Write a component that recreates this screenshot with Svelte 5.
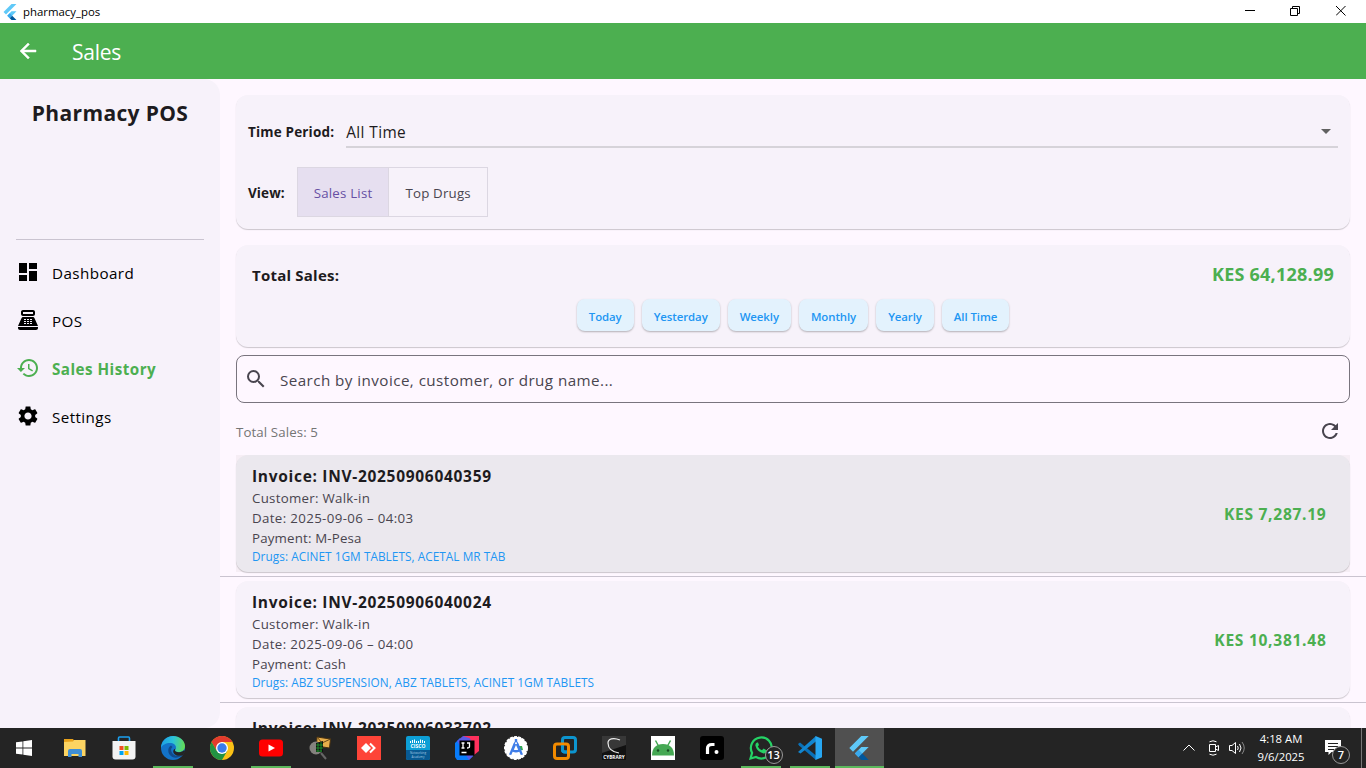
<script>
  const nav = [
    { label: 'Dashboard', icon: 'dash' },
    { label: 'POS', icon: 'pos' },
    { label: 'Sales History', icon: 'history', active: true },
    { label: 'Settings', icon: 'settings' }
  ];
  const chips = ['Today', 'Yesterday', 'Weekly', 'Monthly', 'Yearly', 'All Time'];
  const invoices = [
    { id: 'INV-20250906040359', date: '2025-09-06 – 04:03', pay: 'M-Pesa', drugs: 'ACINET 1GM TABLETS, ACETAL MR TAB', total: '7,287.19', hover: true },
    { id: 'INV-20250906040024', date: '2025-09-06 – 04:00', pay: 'Cash', drugs: 'ABZ SUSPENSION, ABZ TABLETS, ACINET 1GM TABLETS', total: '10,381.48' },
    { id: 'INV-20250906033702' }
  ];
  const tasks = [
    { n: 'files' }, { n: 'store' }, { n: 'edge', open: true }, { n: 'chrome' }, { n: 'youtube', open: true },
    { n: 'mail' }, { n: 'anydesk' }, { n: 'cisco' }, { n: 'idea' }, { n: 'studio' }, { n: 'vmware' },
    { n: 'cybrary' }, { n: 'android' }, { n: 'r' }, { n: 'whatsapp', open: true }, { n: 'code', open: true },
    { n: 'flutter', open: true, active: true }
  ];
</script>

{#snippet flutter(size)}
  <svg width={size} height={size} viewBox="0 0 24 24">
    <path fill="#5fc9f8" d="M14.3 0 2.3 12l3.7 3.7L21.7 0zM14.3 11 7.9 17.500l3.700 3.700L21.700 11z" />
    <path fill="#39a9ee" d="m7.900 17.500 3.700-3.700 3.700 3.700-3.700 3.700z" />
    <path fill="#01579b" d="m11.600 21.200 3.700-3.700L21.700 24h-7.400z" />
  </svg>
{/snippet}

<div class="screen">
  <div class="titlebar">
    {@render flutter(16)}
    <span class="wname">pharmacy_pos</span>
    <div class="wbtns">
      <svg width="10" height="11" viewBox="0 0 10 11"><path d="M0 4.500h10" /></svg>
      <svg width="11" height="11" viewBox="0 0 11 11"><path d="M.5 2.500h7v7h-7zM2.500 2.500v-2h7v7h-2" /></svg>
      <svg width="11" height="11" viewBox="0 0 11 11"><path d="m0 0 9.500 9.500m0-9.500L0 9.500" /></svg>
    </div>
  </div>
  <header>
    <svg class="mi back" viewBox="0 0 24 24"><path d="M20 11H7.830l5.590-5.590L12 4l-8 8 8 8 1.410-1.410L7.830 13H20v-2z" /></svg>
    <h1>Sales</h1>
  </header>
  <div class="body">
    <aside>
      <div class="brand">Pharmacy POS</div>
      <nav>
        {#each nav as n}
          <div class="item" class:active={n.active}>
            <svg class="mi" viewBox="0 0 24 24">
              {#if n.icon === 'dash'}
                <path d="M3 13h8V3H3v10zm0 8h8v-6H3v6zm10 0h8V11h-8v10zm0-18v6h8V3h-8z" />
              {:else if n.icon === 'pos'}
                <path fill-rule="evenodd" d="M17 2H7c-1.100 0-2 .9-2 2v2c0 1.100.9 2 2 2h10c1.100 0 2-.9 2-2V4c0-1.100-.9-2-2-2zm0 4H7V4h10v2zm3 16H4c-1.100 0-2-.9-2-2v-1h20v1c0 1.100-.9 2-2 2zM18.530 10.190C18.210 9.470 17.490 9 16.700 9H7.300c-.79 0-1.510.47-1.830 1.190L2 18h20zM8 11h2v1H8zm0 2h2v1H8zm0 2h2v1H8zm3-4h2v1h-2zm0 2h2v1h-2zm0 2h2v1h-2zm3-4h2v1h-2zm0 2h2v1h-2zm0 2h2v1h-2z" />
              {:else if n.icon === 'history'}
                <path d="M13 3c-4.970 0-9 4.030-9 9H1l3.890 3.890.07.14L9 12H6c0-3.870 3.130-7 7-7s7 3.130 7 7-3.130 7-7 7c-1.930 0-3.680-.79-4.940-2.060l-1.420 1.420C8.270 19.990 10.510 21 13 21c4.970 0 9-4.030 9-9s-4.030-9-9-9zm-1 5v5l4.280 2.540.72-1.210-3.500-2.080V8H12z" />
              {:else}
                <path d="M19.140 12.940c.04-.3.06-.61.06-.94 0-.32-.02-.64-.07-.94l2.030-1.580c.18-.14.23-.41.12-.61l-1.920-3.320c-.12-.22-.37-.29-.59-.22l-2.390.96c-.5-.38-1.030-.7-1.620-.94l-.36-2.540c-.04-.24-.24-.41-.48-.41h-3.840c-.24 0-.43.17-.47.41l-.36 2.540c-.59.24-1.130.57-1.620.94l-2.390-.96c-.22-.08-.47 0-.59.22L2.740 8.870c-.12.21-.08.47.12.61l2.030 1.580c-.05.3-.09.63-.09.94s.02.64.07.94l-2.030 1.580c-.18.14-.23.41-.12.61l1.920 3.320c.12.22.37.29.59.22l2.390-.96c.5.38 1.030.7 1.620.94l.36 2.540c.05.24.24.41.48.41h3.840c.24 0 .44-.17.47-.41l.36-2.540c.59-.24 1.130-.56 1.620-.94l2.390.96c.22.08.47 0 .59-.22l1.920-3.320c.12-.22.07-.47-.12-.61l-2.010-1.580zM12 15.600c-1.980 0-3.600-1.620-3.600-3.600s1.620-3.600 3.600-3.600 3.600 1.620 3.600 3.600-1.620 3.600-3.600 3.600z" />
              {/if}
            </svg>
            <span>{n.label}</span>
          </div>
        {/each}
      </nav>
    </aside>
    <main>
      <section class="card filters">
        <div class="frow period">
          <b>Time Period:</b>
          <div class="select"><span>All Time</span><svg width="24" height="24" viewBox="0 0 24 24"><path fill="#616161" d="m7 10 5 5 5-5z" /></svg></div>
        </div>
        <div class="frow">
          <b>View:</b>
          <div class="toggle"><span class="on">Sales List</span><span>Top Drugs</span></div>
        </div>
      </section>
      <section class="card totals">
        <div class="trow"><b>Total Sales:</b><strong>KES 64,128.99</strong></div>
        <div class="chips">{#each chips as c}<button>{c}</button>{/each}</div>
      </section>
      <div class="search">
        <svg class="mi" viewBox="0 0 24 24"><path d="M15.500 14h-.79l-.28-.27A6.471 6.471 0 0 0 16 9.500 6.500 6.500 0 1 0 9.500 16c1.610 0 3.090-.59 4.230-1.570l.27.28v.79l5 4.990L20.490 19l-4.990-5zm-6 0C7.010 14 5 11.990 5 9.500S7.010 5 9.500 5 14 7.010 14 9.500 11.990 14 9.500 14z" /></svg>
        <span>Search by invoice, customer, or drug name...</span>
      </div>
      <div class="count">
        <span>Total Sales: 5</span>
        <svg class="mi" viewBox="0 0 24 24"><path d="M17.650 6.350C16.200 4.900 14.210 4 12 4c-4.420 0-7.990 3.580-7.990 8s3.570 8 7.990 8c3.730 0 6.840-2.550 7.730-6h-2.080c-.82 2.330-3.040 4-5.650 4-3.310 0-6-2.690-6-6s2.690-6 6-6c1.660 0 3.140.69 4.220 1.780L13 11h7V4l-2.350 2.350z" /></svg>
      </div>
      <div class="list">
        {#each invoices as v}
          <div class="slot">
            <div class="hit" class:hover={v.hover}>
              <article class="card inv">
                <div>
                  <h2>Invoice: {v.id}</h2>
                  {#if v.total}
                    <p>Customer: Walk-in</p>
                    <p class="date">Date: {v.date}</p>
                    <p class="pay">Payment: {v.pay}</p>
                    <p class="drugs">Drugs: {v.drugs}</p>
                  {/if}
                </div>
                {#if v.total}<strong>KES {v.total}</strong>{/if}
              </article>
            </div>
          </div>
        {/each}
      </div>
    </main>
  </div>
  <footer>
    <div class="start"><svg width="16" height="16" viewBox="0 0 16 16"><path fill="#fff" d="M0 2.300 6.500 1.400v6.200H0zM7.300 1.300 16 0v7.600H7.300zM0 8.400h6.500v6.200L0 13.700zM7.300 8.400H16V16l-8.700-1.300z" /></svg></div>
    {#each tasks as k}
      <div class="task" class:open={k.open} class:active={k.active}>
        {#if k.n === 'flutter'}
          {@render flutter(24)}
        {:else}
          <svg width="24" height="24" viewBox="0 0 24 24">
            {#if k.n === 'files'}
              <path fill="#e9a21b" d="M1 3h9l2 3H1z" /><path fill="#fcd462" d="M1 6l9-.500 1-1.500h11.500v16H1z" /><path fill="#3f8fd6" d="M5 21v-6q0-2 2-2h10q2 0 2 2v6h-3.500v-3h-7v3z" />
            {:else if k.n === 'store'}
              <path fill="none" stroke="#1ba0f0" stroke-width="1.600" d="M6.500 6V2.200q0-1.200 1-1.200h9q1 0 1 1.200V6" /><path fill="#f3f3f3" d="M.5 5h23v15.500q0 3-3 3h-17q-3 0-3-3z" />
              <path fill="#f25022" d="M7.500 10h4v4h-4z" /><path fill="#7fba00" d="M12.500 10h4v4h-4z" /><path fill="#00a4ef" d="M7.500 15h4v4h-4z" /><path fill="#ffb900" d="M12.500 15h4v4h-4z" />
            {:else if k.n === 'edge'}
              <defs><linearGradient id="eg" x1="0" x2="1" y1="0.300" y2="0.400"><stop offset="0" stop-color="#1c9ee8" /><stop offset=".5" stop-color="#2cc3d8" /><stop offset="1" stop-color="#63dd55" /></linearGradient></defs>
              <circle cx="12" cy="12" r="12" fill="#1373c9" />
              <path fill="url(#eg)" d="M0 12C0 5 5.500 0 12 0s12 4.800 12 10c0 4-3 6-6 6-2.600 0-4-.9-4-1.800 0-.6 1-1 1-2.900C15 9 12.500 7 9 7c-4 0-8 2-9 5z" />
              <path fill="#114a8b" d="M10 9.500c-3 1.800-3.600 6-1.300 9.200C11.500 22.500 17 22.500 21 19.500c-3 1-6.500.8-8.800-1.300C9.800 16 9.300 12.500 11.500 11z" />
              <path fill="#242424" d="M14.600 12.500c-.4.8-.8 1.300-.6 2 .3 1.200 2 1.800 4.200 1.700 2 0 3.800-.8 5-2.200l.8 1.500-1.800 3.500c-3 1.500-7 1-8.800-1-1.700-2-1.700-4.500 1.200-5.500z" />
            {:else if k.n === 'chrome'}
              <circle cx="12" cy="12" r="12" fill="#fbc116" /><path fill="#e33b2e" d="M1.600 6A12 12 0 0 1 22.400 6H12L6.800 15z" /><path fill="#229342" d="M1.600 6A12 12 0 0 0 12 24l5.200-9H6.800z" /><circle cx="12" cy="12" r="6" fill="#fff" /><circle cx="12" cy="12" r="4.700" fill="#3a7cec" />
            {:else if k.n === 'youtube'}
              <rect y="3.500" width="24" height="17" rx="3.500" fill="#f00" /><path fill="#fff" d="m9.500 8.500 6.500 3.500-6.500 3.500z" />
            {:else if k.n === 'mail'}
              <path fill="#e7ae4b" stroke="#473010" d="m9 1 13.500 2-1 9-13-2z" /><path fill="none" stroke="#6a4919" d="m9 1 5 6 8.500-4" /><circle cx="8" cy="12" r="6.500" fill="#85827e" /><path fill="#111" d="m8 7 7-2v11H8z" /><path stroke="#1fa32f" stroke-width=".8" d="M8 9h7M8 12h7M8 15h6M10 7v9M13 6v10" /><path stroke="#666" stroke-width="2" d="m13 17 5 6" />
            {:else if k.n === 'anydesk'}
              <path fill="#fe4438" d="M0 0h24v24H0z" /><path fill="#fff" d="m9 7 5 5-5 5-5-5z" /><path fill="none" stroke="#fff" stroke-width="2" d="m13 7.500 4.500 4.500-4.500 4.500" />
            {:else if k.n === 'cisco'}
              <rect width="24" height="24" rx="2" fill="#0d9fd6" /><path fill="#085a93" d="M0 14h24v8q0 2-2 2H2q-2 0-2-2z" /><path stroke="#fff" d="M4.500 5v2M6.500 4v3M8.500 3.500V7M10.500 5v2M12.500 5v2M14.500 3.500V7M16.500 4v3M18.500 5v2" /><text x="12" y="12" fill="#fff" font-size="5" font-weight="700" text-anchor="middle">CISCO</text><text x="12" y="18" fill="#a9cce4" font-size="3" text-anchor="middle">Networking</text><text x="12" y="21.500" fill="#a9cce4" font-size="3" text-anchor="middle">Academy</text>
            {:else if k.n === 'idea'}
              <path fill="#087cfa" d="M0 7 5 2v15l13 3-4 4H2l-2-3z" /><path fill="#fe315d" d="M8 0h16v15l-5 4z" /><path fill="#5c59e6" d="M2 5 8 0l12 4-2 16-4 4z" /><path fill="#fe315d" d="M14 0h10v14l-5-2z" /><path fill="#000" d="M4.500 4.500h15v15h-15z" /><path fill="none" stroke="#fff" stroke-width="1.300" d="M6.500 7h3M8 7v5M6.500 12h3M12 7h2.500v3.500q0 1.500-2.500 1.500M6.500 16.500h5" />
            {:else if k.n === 'studio'}
              <circle cx="12" cy="12" r="11.200" fill="#fff" stroke="#fff" stroke-width="1.600" stroke-dasharray="3 1.200" /><path fill="#35a853" d="m14 10 4 0 1 4-3 .5z" /><path fill="#3f7de8" d="M10.800 3h2.400v2.500l1.300 2L19 18.500l-2.200.5-1.500-3.300q-3.300 1.500-6.600 0L7.200 19 5 18.500 9.500 7.500l1.300-2zM12 9l-2.200 4.700q2.200.8 4.400 0z" /><circle cx="12" cy="7.300" r="1" fill="#fff" />
            {:else if k.n === 'vmware'}
              <rect x="9.500" y="1.500" width="13" height="14.500" rx="2.500" fill="none" stroke="#0d95cf" stroke-width="3" /><rect x="1.500" y="8" width="14" height="14.500" rx="2.500" fill="none" stroke="#f38b00" stroke-width="3" /><path fill="none" stroke="#0d95cf" stroke-width="3" d="M9.500 9.500v4q0 2.500 2.500 2.500h2" />
            {:else if k.n === 'cybrary'}
              <path fill="#111" d="M0 0h24v24H0z" /><path fill="#383838" d="M0 0h24v9L0 17z" /><path fill="none" stroke="#eee" stroke-width="1.200" d="M18 4C11 1 6 3 6 7c0 5 4 9 11 10" /><text x="12" y="22.500" fill="#fff" font-size="4.700" font-weight="700" text-anchor="middle">CYBRARY</text>
            {:else if k.n === 'android'}
              <path fill="#fff" d="M0 0h24v24H0z" /><path fill="#45a853" d="M1 19.500C1 12 5 8 12 8s11 4 11 11.500z" /><path stroke="#45a853" stroke-width="1.500" d="M7.500 10 4.500 4.500M16.500 10l3-5.500" /><circle cx="7" cy="14.500" r="1.200" fill="#174b22" /><circle cx="17" cy="14.500" r="1.200" fill="#174b22" />
            {:else if k.n === 'r'}
              <rect width="24" height="24" rx="3" fill="#000" /><path fill="none" stroke="#fff" stroke-width="3.200" d="M7.500 18v-5.500q0-4 4.500-4h2.500" /><circle cx="16.500" cy="16" r="2" fill="#fff" />
            {:else if k.n === 'whatsapp'}
              <path fill="none" stroke="#25d366" stroke-width="2.200" d="m1.500 22.500 1.600-5.600A10.500 10.500 0 1 1 7 21z" /><path fill="#25d366" d="M8 6.500q-2 1-1.500 3.500 1.500 5.500 8 7.500 3 0 3.500-3l-3.500-2-1.500 1.800q-2.800-1.100-4.200-3.900L10 9 9 6.500z" />
            {:else}
              <path fill="#0a71b8" d="m0 8 2-1.500 16 13V24L1 9.500z" /><path fill="#1286d0" d="M0 16 18 0l.5 5L2.500 17.500z" /><path fill="#27a7f2" d="m17.500 0 6.500 2.800v18.400L17.500 24z" />
            {/if}
          </svg>
        {/if}
        {#if k.n === 'whatsapp'}<span class="badge">13</span>{/if}
      </div>
    {/each}
    <div class="tray">
      <svg width="14" height="14" viewBox="0 0 14 14"><path d="m1.500 9.500 5.500-5.500 5.500 5.500" /></svg>
      <svg class="cam" width="14" height="16" viewBox="0 0 14 16"><path d="M2.500 4.500h6v7h-6zM8.500 7l3-1.500v5L8.500 9M2.500 1.800q3.500-2 7 0M2.500 14.200q3.500 2 7 0" /></svg>
      <svg class="vol" width="18" height="16" viewBox="0 0 18 16"><path d="M1.500 5.500h2.500l3.500-3v11l-3.500-3H1.500zM9.500 6q1.500 2 0 4M11.500 4q3 4 0 8" /><path class="dim" d="M14 2q4.500 6 0 12" /></svg>
      <div class="clock"><span>4:18 AM</span><span>9/6/2025</span></div>
      <div class="note"><svg width="16" height="16" viewBox="0 0 16 16"><path class="bubble" d="M0 0h16v12H6.500L3.500 15v-3H0z" /><path class="rule" d="M3 3.500h10M3 6.500h10M3 9.500h6" /></svg><span class="badge">7</span></div>
      <div class="peek"></div>
    </div>
  </footer>
</div>

<style>
  :global(body) { overflow: hidden; }
  .screen { width: 1366px; height: 768px; display: flex; flex-direction: column; overflow: hidden; font-family: "Open Sans", "Noto Sans", sans-serif; color: #1d1b20; background: #fef7ff; white-space: nowrap; }
  h1, h2, p { margin: 0; }
  svg { flex: none; display: block; }
  .mi { width: 24px; height: 24px; fill: currentColor; }
  .titlebar { flex: none; height: 23px; display: flex; align-items: center; background: #fff; padding-left: 2px; color: #000; }
  .wname { font-size: 11.4px; margin-left: 5px; }
  .wbtns { margin-left: auto; display: flex; gap: 35px; padding-right: 19px; }
  .wbtns path { fill: none; stroke: #000; }
  header { flex: none; height: 56px; display: flex; align-items: center; gap: 32px; padding-left: 16px; background: #4caf50; color: #fff; }
  .back { stroke: #fff; stroke-width: .5; }
  h1 { font-size: 21px; font-weight: 400; line-height: 28px; letter-spacing: -.25px; padding-top: 2px; }
  .body { flex: 1; min-height: 0; display: flex; }
  aside { flex: none; width: 220px; background: #f7f2fa; border-radius: 0 16px 16px 0; padding: 0 16px; box-sizing: border-box; }
  .brand { height: 161px; border-bottom: 1px solid #cac4d0; text-align: center; font-size: 21px; font-weight: 700; letter-spacing: .35px; line-height: 30px; padding-top: 19px; box-sizing: border-box; }
  nav { padding-top: 8px; color: #000; }
  .item { height: 48px; display: flex; align-items: center; gap: 12px; font-size: 15.2px; letter-spacing: .42px; }
  .item span { padding-top: 2px; }
  .item.active { color: #4caf50; font-weight: 700; letter-spacing: .48px; }
  main { flex: 1; min-width: 0; display: flex; flex-direction: column; padding-top: 16px; }
  .card { background: #f7f2fa; border-radius: 12px; box-shadow: 0 1px 1px rgba(0, 0, 0, .2); margin: 0 16px; box-sizing: border-box; }
  .filters { flex: none; height: 134px; padding: 12px; }
  .frow { display: flex; align-items: center; font-size: 13.5px; letter-spacing: .09px; gap: 12px; }
  .frow b { padding-top: 1px; }
  .period { height: 48px; margin-bottom: 12px; letter-spacing: .17px; }
  .select { flex: 1; height: 30px; margin-top: 2px; border-bottom: 2px solid #d6d3d9; display: flex; justify-content: space-between; align-items: center; font-size: 15.4px; font-weight: 500; letter-spacing: .4px; }
  .select span { padding-top: 2px; }
  .toggle { display: flex; border: 1px solid #dcd7e2; height: 48px; line-height: 50px; font-size: 13.3px; letter-spacing: .2px; }
  .toggle span { padding: 0 16px; color: #49454f; }
  .toggle .on { background: #e6dff0; color: #6750a4; border-right: 1px solid #dcd7e2; }
  .totals { flex: none; height: 102px; margin-top: 16px; padding: 16px; }
  .trow { display: flex; justify-content: space-between; align-items: center; height: 26px; font-size: 15px; letter-spacing: .22px; }
  .trow b { padding-top: 2px; }
  .trow strong { font-size: 18px; letter-spacing: .24px; color: #4caf50; }
  .chips { display: flex; justify-content: center; gap: 8px; margin-top: 12px; }
  .chips button { font: 600 11.4px "Open Sans", sans-serif; letter-spacing: -.07px; height: 32px; border: 0; border-radius: 8px; background: #e3f2fd; color: #2196f3; padding: 2px 12px 0; box-shadow: 0 1px 2px rgba(0, 0, 0, .28); }
  .search { flex: none; height: 48px; margin: 8px 16px 0; border: 1px solid #79747e; border-radius: 8px; box-sizing: border-box; display: flex; align-items: center; gap: 12px; padding-left: 7px; font-size: 15.2px; letter-spacing: .44px; color: #49454f; }
  .search span { padding-top: 2px; }
  .count { flex: none; height: 48px; display: flex; justify-content: space-between; align-items: center; padding: 8px 24px 0 16px; box-sizing: border-box; font-size: 13.3px; letter-spacing: .1px; color: #757575; }
  .count span { padding-top: 2px; }
  .count .mi { color: #49454f; }
  .list { flex: 1; min-height: 0; overflow: hidden; }
  .slot { height: 126px; border-bottom: 1px solid #cac4d0; box-sizing: border-box; padding-top: 4px; }
  .hit { margin: 0 16px; }
  .hit.hover { background: #f6eef5; }
  .inv { margin: 0; height: 117px; padding: 9px 23.500px 0 16px; display: flex; justify-content: space-between; align-items: flex-start; }
  .hover .inv { background: #ebe8ee; }
  h2 { font-size: 15.5px; line-height: 25px; height: 24px; letter-spacing: .7px; }
  p { font-size: 13.3px; line-height: 20px; letter-spacing: .27px; color: #49454f; }
  p.date { letter-spacing: .35px; }
  p.pay { letter-spacing: .17px; }
  p.drugs { font-size: 11.8px; line-height: 16px; letter-spacing: .05px; color: #2196f3; }
  .inv strong { color: #4caf50; font-size: 15.6px; letter-spacing: .7px; line-height: 100px; }
  footer { flex: none; height: 40px; background: #242424; display: flex; color: #fff; }
  .start { flex: none; width: 50.5px; display: grid; place-items: center; box-sizing: border-box; padding-right: 2.5px; }
  .task { flex: none; width: 49px; display: grid; place-items: center; position: relative; }
  .task.open::after { content: ''; position: absolute; bottom: 0; left: 4.5px; width: 40px; height: 2px; background: #5cb85c; }
  .task.active { background: #505050; }
  .task.active.open::after { left: 0; width: 100%; }
  .badge { position: absolute; right: 3px; bottom: 4px; width: 18px; height: 18px; border: 1px solid #999; border-radius: 50%; background: #242424; font-size: 11px; font-weight: 600; line-height: 16px; text-align: center; box-sizing: border-box; }
  .tray { margin-left: auto; display: flex; align-items: center; font-size: 11.3px; }
  .tray path { fill: none; stroke: #fff; }
  .tray .dim { stroke: #888; }
  .tray .bubble { fill: #fff; stroke: none; }
  .tray .rule { stroke: #222; }
  .cam { margin-left: 11px; }
  .vol { margin-left: 7px; }
  .clock { width: 50px; margin: 0 19px 0 10px; display: flex; flex-direction: column; align-items: center; line-height: 18px; }
  .note { position: relative; width: 16px; margin-right: 20px; }
  .note .badge { left: 7px; right: auto; bottom: -8px; }
  .peek { width: 5px; height: 40px; border-left: 1px solid #777; box-sizing: border-box; }
</style>
